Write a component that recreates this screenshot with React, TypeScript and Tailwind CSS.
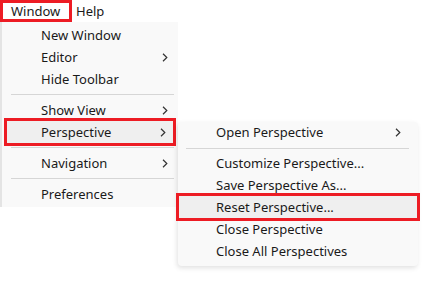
type Item = { label: string; sub?: boolean; marked?: boolean } | 'sep';

const mainItems: Item[] = [
  { label: 'New Window' },
  { label: 'Editor', sub: true },
  { label: 'Hide Toolbar' },
  'sep',
  { label: 'Show View', sub: true },
  { label: 'Perspective', sub: true, marked: true },
  'sep',
  { label: 'Navigation', sub: true },
  'sep',
  { label: 'Preferences' },
];

const perspectiveItems: Item[] = [
  { label: 'Open Perspective', sub: true },
  'sep',
  { label: 'Customize Perspective...' },
  { label: 'Save Perspective As...' },
  { label: 'Reset Perspective...', marked: true },
  { label: 'Close Perspective' },
  { label: 'Close All Perspectives' },
];

function Chevron() {
  return (
    <svg width="6" height="9" viewBox="0 0 6 9" className="shrink-0">
      <path d="M1 0.8 L4.8 4.5 L1 8.2" fill="none" stroke="#333" strokeWidth="1.2" />
    </svg>
  );
}

export default function App() {
  return (
    <div className="relative w-[438px] h-[296px] bg-white overflow-hidden text-[13px] text-[#1a1a1a] font-['Noto_Sans',sans-serif]">
      {/* menu bar */}
      <div className="flex h-[22px] items-center">
        <div className="h-[22px] w-[72px] border-[3px] border-[#ed1c24] pl-[8px] flex items-center leading-none">
          Window
        </div>
        <div className="pl-[4px] leading-none">Help</div>
      </div>

      {/* Window menu */}
      <div className="absolute left-0 top-[22px] w-[178px] bg-[#f9f9f9] border-l-2 border-[#e4e4e4] pt-[2px] pb-[2px]">
        {mainItems.map((it, i) =>
          it === 'sep' ? (
            <div key={i} className="h-[9px] pt-[4px] pl-[9px] pr-[4px]">
              <div className="h-px bg-[#d6d6d6]" />
            </div>
          ) : it.marked ? (
            <div
              key={i}
              className="mx-[5px] h-[22px] flex items-center justify-between pl-[34px] pr-[7px] bg-[#efefef] outline-solid outline-[3px] outline-[#ed1c24]"
            >
              <span className="leading-none">{it.label}</span>
              {it.sub && <Chevron />}
            </div>
          ) : (
            <div key={i} className="h-[22px] flex items-center justify-between pl-[39px] pr-[10px]">
              <span className="leading-none">{it.label}</span>
              {it.sub && <Chevron />}
            </div>
          )
        )}
      </div>

      {/* Perspective submenu */}
      <div className="absolute left-[178px] top-[122px] w-[240px] bg-[#f9f9f9] rounded-[4px] pb-[4px] shadow-[-1px_2px_5px_rgba(0,0,0,0.12)]">
        {perspectiveItems.map((it, i) =>
          it === 'sep' ? (
            <div key={i} className="h-[9px] pt-[5px] pl-[8px] pr-[9px]">
              <div className="h-px bg-[#d6d6d6]" />
            </div>
          ) : it.marked ? (
            <div
              key={i}
              className="mx-[1px] h-[22px] flex items-center justify-between pl-[37px] pr-[16px] bg-[#efefef] outline-solid outline-[3px] outline-[#ed1c24]"
            >
              <span className="leading-none">{it.label}</span>
              {it.sub && <Chevron />}
            </div>
          ) : (
            <div
              key={i}
              className={`flex items-center justify-between pl-[38px] pr-[17px] ${i === 0 ? 'h-[21px]' : 'h-[22px]'}`}
            >
              <span className="leading-none">{it.label}</span>
              {it.sub && <Chevron />}
            </div>
          )
        )}
      </div>
    </div>
  );
}
